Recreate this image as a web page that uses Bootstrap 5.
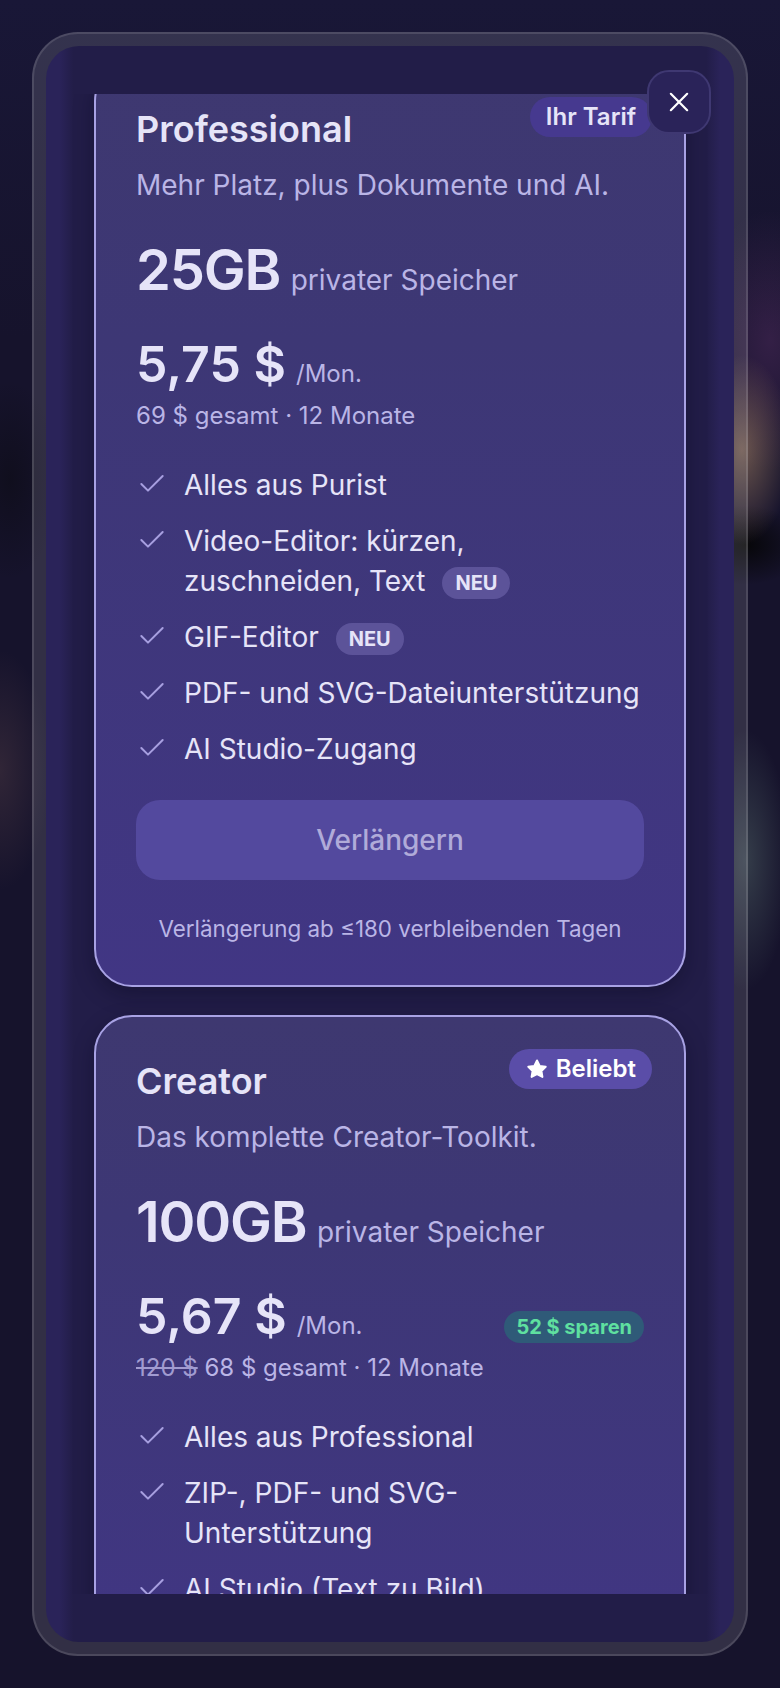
<!DOCTYPE html>
<html lang="de">
<head>
  <meta charset="UTF-8" />
  <meta name="viewport" content="width=device-width, initial-scale=1.0" />
  <title>Tarife</title>
  <link href="https://cdn.jsdelivr.net/npm/bootstrap@5.3.0/dist/css/bootstrap.min.css" rel="stylesheet">
  <style>
    html, body { height: 100%; }
    body {
      font-family: Inter, "Liberation Sans", sans-serif;
      overflow: hidden;
      background-color: #16132c;
      background-image:
        radial-gradient(ellipse 50px 95px at 742px 450px, rgba(190,150,110,.5), transparent),
        radial-gradient(ellipse 75px 130px at 770px 340px, rgba(120,60,130,.3), transparent),
        radial-gradient(ellipse 60px 40px at 745px 545px, rgba(5,5,5,.9), transparent),
        radial-gradient(ellipse 45px 130px at 745px 860px, rgba(110,140,130,.35), transparent),
        radial-gradient(ellipse 50px 120px at 0 770px, rgba(110,80,80,.3), transparent),
        radial-gradient(ellipse 50px 100px at 10px 480px, rgba(10,10,15,.5), transparent),
        linear-gradient(180deg, #191737 0, #16132c 20%, #16132c 100%);
    }
    .frame {
      margin: 32px;
      height: 1624px;
      padding: 12px;
      border: 2px solid rgba(255,255,255,.12);
      border-radius: 46px;
      background: rgba(255,255,255,.12);
      position: relative;
    }
    .panel {
      height: 100%;
      padding: 48px 0;
      border-radius: 33px;
      background: #2a2359;
      background-image: linear-gradient(90deg, #2a2359 0, #2a2359 2%, #221d48 4%, #221d48 96%, #2a2359 98%, #2a2359 100%);
    }
    .scroller { height: 1500px; overflow: hidden; padding: 0 48px; }
    .plans { margin-top: -31px; gap: 28px; }
    .plan {
      position: relative;
      padding: 42px 40px 38px;
      border: 2px solid #a8a2e4;
      border-radius: 38px;
      background: linear-gradient(180deg, #3e3870 0, #3d3775 30%, #413684 100%);
      box-shadow: 0 8px 20px rgba(10,8,30,.35);
      color: #e6e4f8;
    }
    .plan-name { font-size: 36px; line-height: 44px; font-weight: 600; margin: 0 0 14px; }
    .plan-desc { font-size: 28px; line-height: 40px; color: #bab5e6; margin: 0 0 29px; }
    .storage { line-height: 72px; margin-bottom: 14px; }
    .storage-num { font-size: 56px; font-weight: 600; letter-spacing: -1.2px; }
    .storage-txt { font-size: 28px; color: #bab5e6; margin-left: 6px; }
    .price-num { font-size: 50px; line-height: 60px; font-weight: 600; }
    .price-per { font-size: 24px; color: #bab5e6; margin-left: 10px; }
    .price-sum { font-size: 24px; line-height: 24px; color: #bab5e6; margin-bottom: 37px; }
    .price-sum s { opacity: .8; }
    .features { display: flex; flex-direction: column; gap: 16px; margin: 0 0 31px; padding: 0; list-style: none; font-size: 28px; line-height: 40px; }
    .features li { display: flex; gap: 16px; }
    .features svg { flex: none; width: 32px; height: 32px; margin-top: 3px; stroke: #a79fe0; stroke-width: 1.5; fill: none; stroke-linecap: round; stroke-linejoin: round; }
    .tag-new {
      display: inline-block;
      margin-left: 9px;
      padding: 0 13px;
      font-size: 20px;
      line-height: 32px;
      font-weight: 700;
      border-radius: 16px;
      background: #5c5399;
      vertical-align: 1px;
    }
    .btn.renew {
      display: block;
      width: 100%;
      height: 80px;
      border: 0;
      border-radius: 24px;
      background: #53499e;
      color: #b0abd9;
      font-size: 28px;
      font-weight: 500;
      opacity: 1;
    }
    .renew-note { margin: 31px 0 0; text-align: center; font-size: 22.4px; line-height: 36px; color: #bab5e6; }
    .pill {
      position: absolute;
      top: 32px;
      right: 32px;
      height: 40px;
      padding: 0 16px;
      display: flex;
      align-items: center;
      gap: 7px;
      font-size: 24px;
      font-weight: 600;
      border-radius: 20px;
    }
    .pill-current { background: #46398f; color: #e6e4f8; }
    .pill-popular { background: #5a4da8; color: #fff; }
    .pill-popular svg { width: 24px; height: 24px; fill: #fff; stroke: #fff; stroke-width: 2; stroke-linejoin: round; }
    .save-tag {
      margin-top: 12px;
      padding: 0 12px;
      font-size: 20px;
      line-height: 32px;
      font-weight: 700;
      border-radius: 16px;
      background: #2f5a78;
      color: #5fe0a0;
    }
    .close-btn {
      position: absolute;
      top: 36px;
      right: 35px;
      width: 64px;
      height: 64px;
      display: flex;
      align-items: center;
      justify-content: center;
      border: 2px solid #3f3872;
      border-radius: 22px;
      background: #2a2359;
      padding: 0;
    }
    .close-btn svg { width: 28px; height: 28px; stroke: #fff; stroke-width: 1.9; fill: none; stroke-linecap: round; }
  </style>
</head>
<body>
  <div class="frame">
    <div class="panel">
      <div class="scroller">
        <div class="plans d-flex flex-column">

          <div class="plan">
            <span class="pill pill-current">Ihr Tarif</span>
            <h3 class="plan-name">Professional</h3>
            <p class="plan-desc">Mehr Platz, plus Dokumente und AI.</p>
            <div class="storage"><span class="storage-num">25GB</span> <span class="storage-txt">privater Speicher</span></div>
            <div class="price-num">5,75 $<span class="price-per fw-normal">/Mon.</span></div>
            <div class="price-sum">69 $ gesamt · 12 Monate</div>
            <ul class="features">
              <li><svg viewBox="0 0 24 24"><path d="M20 6 9 17l-5-5"/></svg><span>Alles aus Purist</span></li>
              <li><svg viewBox="0 0 24 24"><path d="M20 6 9 17l-5-5"/></svg><span>Video-Editor: kürzen, zuschneiden, Text <span class="tag-new">NEU</span></span></li>
              <li><svg viewBox="0 0 24 24"><path d="M20 6 9 17l-5-5"/></svg><span>GIF-Editor <span class="tag-new">NEU</span></span></li>
              <li><svg viewBox="0 0 24 24"><path d="M20 6 9 17l-5-5"/></svg><span>PDF- und SVG-Dateiunterstützung</span></li>
              <li><svg viewBox="0 0 24 24"><path d="M20 6 9 17l-5-5"/></svg><span>AI Studio-Zugang</span></li>
            </ul>
            <button class="btn renew" disabled>Verlängern</button>
            <p class="renew-note">Verlängerung ab ≤180 verbleibenden Tagen</p>
          </div>

          <div class="plan">
            <span class="pill pill-popular"><svg viewBox="0 0 24 24"><path d="M12 3.500l2.700 5.400 6 .9-4.300 4.200 1 5.900-5.400-2.800-5.400 2.800 1-5.900-4.300-4.200 6-.9z"/></svg>Beliebt</span>
            <h3 class="plan-name">Creator</h3>
            <p class="plan-desc">Das komplette Creator-Toolkit.</p>
            <div class="storage"><span class="storage-num">100GB</span> <span class="storage-txt">privater Speicher</span></div>
            <div class="d-flex justify-content-between align-items-center">
              <div class="price-num">5,67 $<span class="price-per fw-normal">/Mon.</span></div>
              <span class="save-tag">52 $ sparen</span>
            </div>
            <div class="price-sum"><s>120 $</s> 68 $ gesamt · 12 Monate</div>
            <ul class="features">
              <li><svg viewBox="0 0 24 24"><path d="M20 6 9 17l-5-5"/></svg><span>Alles aus Professional</span></li>
              <li><svg viewBox="0 0 24 24"><path d="M20 6 9 17l-5-5"/></svg><span>ZIP-, PDF- und SVG-Unterstützung</span></li>
              <li><svg viewBox="0 0 24 24"><path d="M20 6 9 17l-5-5"/></svg><span>AI Studio (Text zu Bild)</span></li>
            </ul>
          </div>

        </div>
      </div>
    </div>
    <button class="close-btn" aria-label="Schließen"><svg viewBox="0 0 24 24"><path d="M5 5l14 14M19 5 5 19"/></svg></button>
  </div>
  <script src="https://cdn.jsdelivr.net/npm/bootstrap@5.3.0/dist/js/bootstrap.bundle.min.js"></script>
</body>
</html>
